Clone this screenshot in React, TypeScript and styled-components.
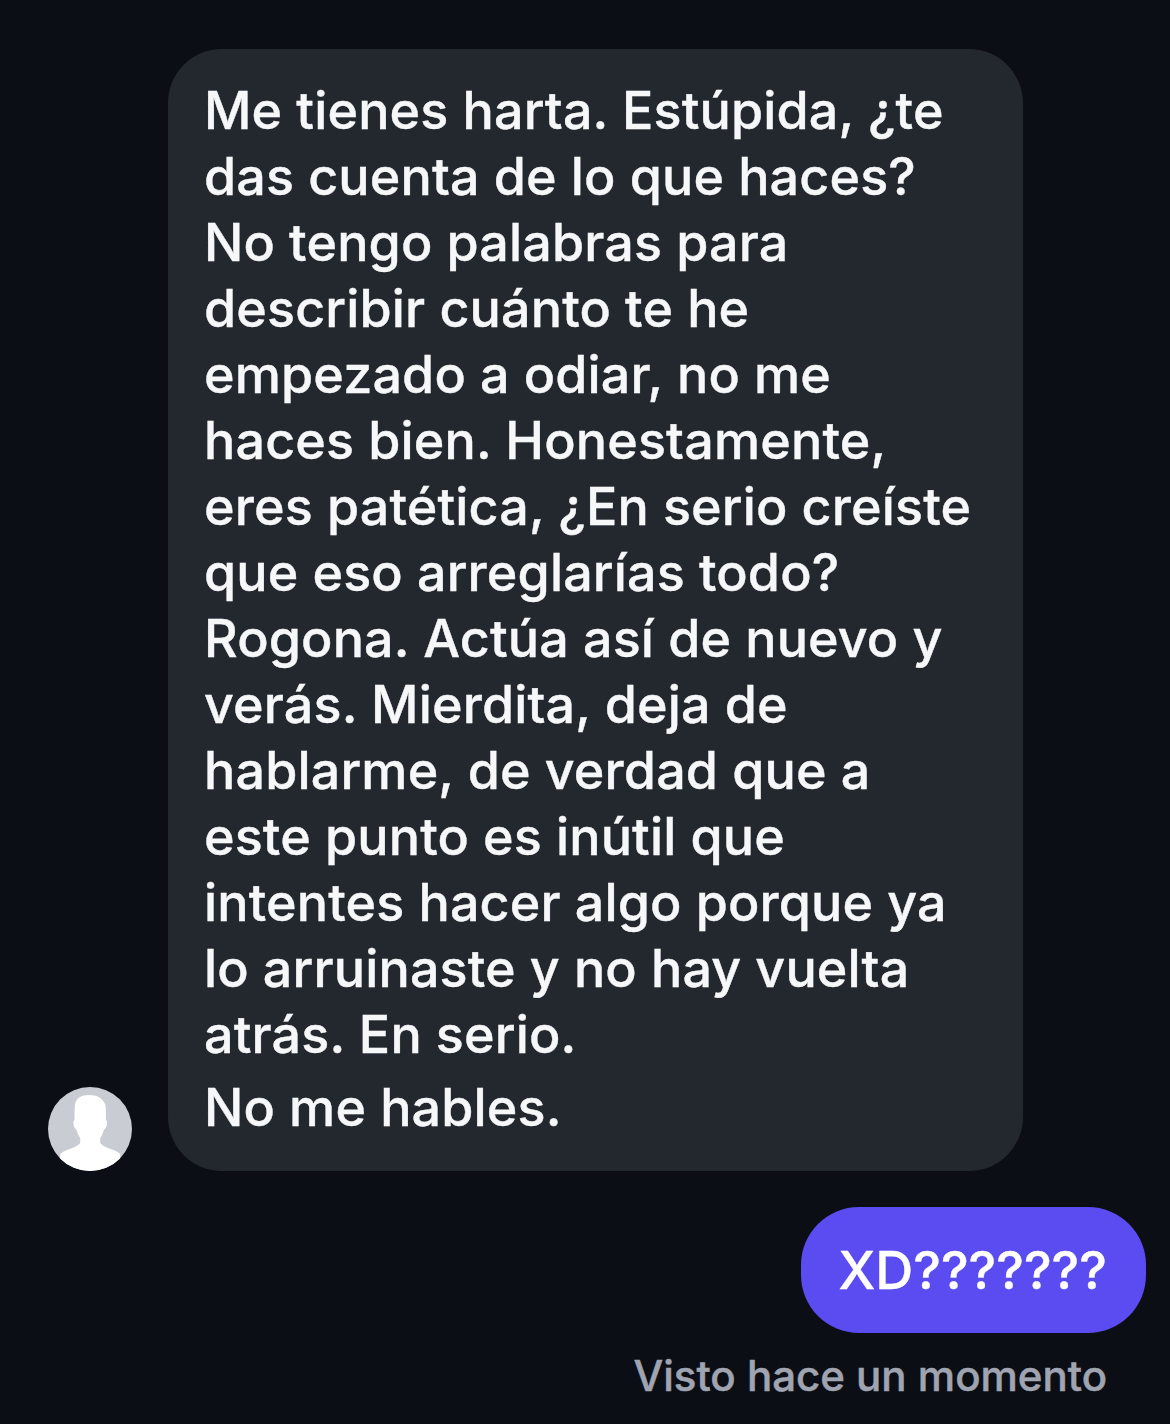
import React from "react";
import styled, { createGlobalStyle } from "styled-components";

const GlobalStyle = createGlobalStyle`
  html, body {
    margin: 0;
    padding: 0;
    background: #0b0f15;
  }
`;

const Page = styled.div`
  width: 1170px;
  height: 1424px;
  box-sizing: border-box;
  padding: 49px 24px 0 48px;
  background: #0b0f15;
  font-family: Inter, "Liberation Sans", sans-serif;
  font-weight: 500;
  overflow: hidden;
`;

const IncomingRow = styled.div`
  display: flex;
  align-items: flex-end;
  gap: 36px;
`;

const Avatar = styled.div`
  width: 84px;
  height: 84px;
  border-radius: 50%;
  overflow: hidden;
  flex-shrink: 0;
`;

const IncomingBubble = styled.div`
  width: 855px;
  height: 1122px;
  box-sizing: border-box;
  padding: 29px 36px 0;
  border-radius: 54px;
  background: #23282e;
  color: #f6f7f9;
  font-size: 52px;
  line-height: 66px;
  letter-spacing: 0.16px;
  -webkit-text-stroke: 0.4px #f6f7f9;
`;

const Line = styled.div`
  white-space: nowrap;
`;

const LastLine = styled(Line)`
  margin-top: 7px;
`;

const OutgoingRow = styled.div`
  display: flex;
  justify-content: flex-end;
  margin-top: 36px;
`;

const OutgoingBubble = styled.div`
  height: 126px;
  box-sizing: border-box;
  padding: 0 39px 0 38px;
  display: flex;
  align-items: center;
  border-radius: 58px;
  background: #5b4cf2;
  color: #ffffff;
  font-size: 52.5px;
  -webkit-text-stroke: 0.4px #ffffff;
`;

const Seen = styled.div`
  margin-top: 18px;
  padding-right: 39px;
  text-align: right;
  color: #a0a4b1;
  font-size: 42px;
  line-height: 50px;
  -webkit-text-stroke: 0.5px #a0a4b1;
`;

const lines = [
  "Me tienes harta. Estúpida, ¿te",
  "das cuenta de lo que haces?",
  "No tengo palabras para",
  "describir cuánto te he",
  "empezado a odiar, no me",
  "haces bien. Honestamente,",
  "eres patética, ¿En serio creíste",
  "que eso arreglarías todo?",
  "Rogona. Actúa así de nuevo y",
  "verás. Mierdita, deja de",
  "hablarme, de verdad que a",
  "este punto es inútil que",
  "intentes hacer algo porque ya",
  "lo arruinaste y no hay vuelta",
  "atrás. En serio.",
];

const App: React.FC = () => {
  return (
    <Page>
      <GlobalStyle />
      <IncomingRow>
        <Avatar>
          <svg width="84" height="84" viewBox="0 0 84 84">
            <rect width="84" height="84" fill="#c9cdd3" />
            <path
              d="M41 8c-8 0-13 3-14 10-.6 5-.6 10-.4 15-1.400 .6-1.600 3-1 5 .6 2 1.600 4 3 5 .8 3 2 6 3.600 8v5c-2 3-8 5-13 7-4 1.500-6 3-7 4v17h60V67c-1-1-3-2.500-7-4-5-2-11-4-13-7v-5c1.600-2 2.800-5 3.600-8 1.400-1 2.400-3 3-5 .6-2 .4-4.400-1-5 .2-5 .2-10-.4-15C55 11 49 8 41 8z"
              fill="#ffffff"
            />
          </svg>
        </Avatar>
        <IncomingBubble>
          {lines.map((line, index) => (
            <Line key={index}>{line}</Line>
          ))}
          <LastLine>No me hables.</LastLine>
        </IncomingBubble>
      </IncomingRow>
      <OutgoingRow>
        <OutgoingBubble>XD???????</OutgoingBubble>
      </OutgoingRow>
      <Seen>Visto hace un momento</Seen>
    </Page>
  );
};

export default App;
